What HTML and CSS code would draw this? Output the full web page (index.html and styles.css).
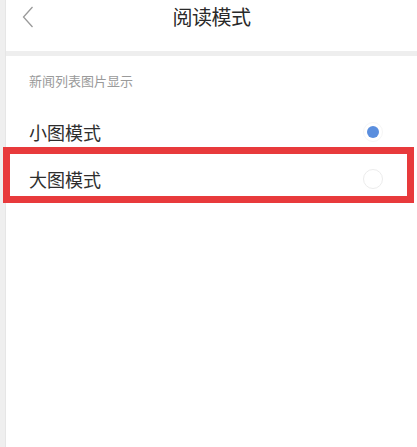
FILE: index.html
```html
<!DOCTYPE html>
<html lang="zh-CN">
<head>
<meta charset="utf-8">
<title>阅读模式</title>
<link rel="stylesheet" href="styles.css">
</head>
<body>
<div class="page">
  <div class="rail"></div>
  <div class="main">
    <header class="topbar">
      <svg class="back" width="12" height="22" viewBox="0 0 12 22"><path d="M10.5 1 L1.5 11 L10.5 21" fill="none" stroke="#9a9a9a" stroke-width="1.3"/></svg>
      <h1 class="title">阅读模式</h1>
    </header>
    <div class="divider"></div>
    <section class="section">
      <div class="section-label">新闻列表图片显示</div>
      <div class="row">
        <span class="row-text">小图模式</span>
        <span class="radio checked"><span class="dot"></span></span>
      </div>
      <div class="row">
        <span class="row-text">大图模式</span>
        <span class="radio"></span>
      </div>
    </section>
  </div>
  <div class="highlight"></div>
</div>
</body>
</html>
```

FILE: styles.css
```css
html, body {
  margin: 0;
  padding: 0;
  background: #ffffff;
}
body {
  font-family: "Noto Sans CJK SC", "Noto Sans", sans-serif;
}
.page {
  position: relative;
  display: flex;
  min-height: 447px;
}
.rail {
  width: 5px;
  background: #efefef;
  border-right: 1px solid #e6e6e6;
  flex: none;
}
.main {
  flex: 1;
  display: flex;
  flex-direction: column;
}
.topbar {
  position: relative;
  height: 51px;
  display: flex;
  justify-content: center;
  align-items: flex-start;
}
.back {
  position: absolute;
  left: 16px;
  top: 6px;
}
.title {
  margin: 5px 0 0;
  font-size: 20px;
  line-height: 24px;
  font-weight: 400;
  color: #2a2a2a;
  letter-spacing: -0.5px;
}
.divider {
  height: 5px;
  background: #eeeeee;
}
.section {
  display: flex;
  flex-direction: column;
}
.section-label {
  padding: 16px 0 19px 23px;
  font-size: 13px;
  line-height: 17px;
  color: #9a9a9a;
}
.row {
  height: 47px;
  display: flex;
  align-items: center;
  justify-content: space-between;
  padding: 0 34px 0 23px;
}
.row-text {
  font-size: 18px;
  color: #2e2e2e;
}
.radio {
  width: 20px;
  height: 20px;
  box-sizing: border-box;
  border-radius: 50%;
  border: 1px solid #ececec;
  display: flex;
  align-items: center;
  justify-content: center;
}
.radio.checked {
  border-color: #f6f6f6;
}
.dot {
  width: 12px;
  height: 12px;
  border-radius: 50%;
  background: #5a8ede;
}
.highlight {
  position: absolute;
  left: 3px;
  top: 147px;
  width: 411px;
  height: 56px;
  box-sizing: border-box;
  border: 7px solid #e83a3c;
}
```
